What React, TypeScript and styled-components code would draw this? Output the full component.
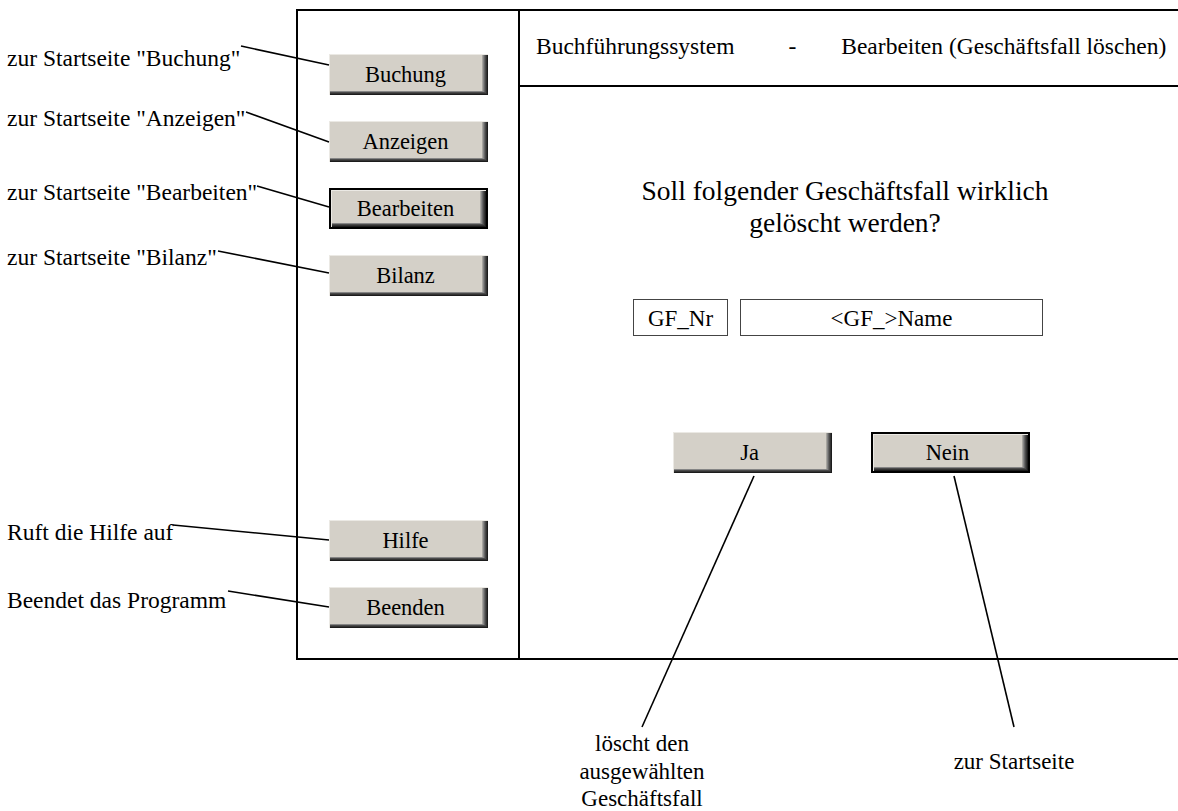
import styled, { createGlobalStyle } from "styled-components";

const GlobalStyle = createGlobalStyle`
  html, body {
    margin: 0;
    padding: 0;
    background: #fff;
  }
  body {
    font-family: "Liberation Serif", "Times New Roman", serif;
    color: #000;
  }
`;

const sideButtons = [
  { label: "Buchung", active: false },
  { label: "Anzeigen", active: false },
  { label: "Bearbeiten", active: true },
  { label: "Bilanz", active: false },
];

const callouts = [
  { text: 'zur Startseite "Buchung"', top: 45 },
  { text: 'zur Startseite "Anzeigen"', top: 105 },
  { text: 'zur Startseite "Bearbeiten"', top: 179 },
  { text: 'zur Startseite "Bilanz"', top: 244 },
  { text: "Ruft die Hilfe auf", top: 519 },
  { text: "Beendet das Programm", top: 587 },
];

// callout leader lines: label end -> button edge
const leaders = [
  [241, 46, 329, 65],
  [246, 112, 329, 142],
  [257, 186, 329, 207],
  [218, 251, 329, 273],
  [173, 525, 329, 540],
  [228, 591, 329, 607],
  [754, 476, 642, 727],
  [954, 476, 1014, 727],
];

export default function App() {
  return (
    <>
      <GlobalStyle />
      <Page>
        <Frame>
          <Sidebar>
            {sideButtons.map((b) => (
              <BevelButton key={b.label} $active={b.active}>
                {b.label}
              </BevelButton>
            ))}
            <Spacer />
            <BevelButton>Hilfe</BevelButton>
            <BevelButton>Beenden</BevelButton>
          </Sidebar>
          <Main>
            <Header>
              <span>Buchführungssystem</span>
              <Dash>-</Dash>
              <span>Bearbeiten (Geschäftsfall löschen)</span>
            </Header>
            <Body>
              <Question>
                Soll folgender Geschäftsfall wirklich
                <br />
                gelöscht werden?
              </Question>
              <FieldRow>
                <Field $width={95}>GF_Nr</Field>
                <Field $width={303}>&lt;GF_&gt;Name</Field>
              </FieldRow>
              <ButtonRow>
                <BevelButton>Ja</BevelButton>
                <BevelButton $active>Nein</BevelButton>
              </ButtonRow>
            </Body>
          </Main>
        </Frame>

        {callouts.map((c) => (
          <Callout key={c.text} style={{ top: c.top }}>
            {c.text}
          </Callout>
        ))}
        <BottomNote style={{ left: 562, top: 730 }}>
          löscht den
          <br />
          ausgewählten
          <br />
          Geschäftsfall
        </BottomNote>
        <BottomNote style={{ left: 934, top: 748 }}>zur Startseite</BottomNote>

        <Leaders width="1178" height="811">
          {leaders.map(([x1, y1, x2, y2], i) => (
            <line key={i} x1={x1} y1={y1} x2={x2} y2={y2} stroke="#000" strokeWidth="1.6" />
          ))}
        </Leaders>
      </Page>
    </>
  );
}

const Page = styled.div`
  position: relative;
  width: 1178px;
  height: 811px;
  overflow: hidden;
  padding-top: 9px;
  box-sizing: border-box;
`;

const Frame = styled.div`
  margin-left: 296px;
  width: 900px;
  height: 651px;
  box-sizing: border-box;
  border: 2px solid #000;
  display: grid;
  grid-template-columns: 222px 1fr;
`;

const Sidebar = styled.div`
  display: flex;
  flex-direction: column;
  gap: 26px;
  padding: 43px 0 30px 31px;
  border-right: 2px solid #000;
`;

const Spacer = styled.div`
  flex: 1;
`;

const BevelButton = styled.div<{ $active?: boolean }>`
  width: 159px;
  height: 41px;
  flex: none;
  box-sizing: border-box;
  display: flex;
  align-items: center;
  justify-content: center;
  padding: 1px 6px 0 0;
  font-size: 22.5px;
  background: #d4d0c8;
  border: ${(p) => (p.$active ? "2px solid #000" : "none")};
  box-shadow:
    inset 1px 1px 0 #ebe9e4,
    inset -1px -1px 0 #1c1c1c,
    inset -2px -2px 0 #333,
    inset -3px -3px 0 #4a4a4a,
    inset -4px -3px 0 #666,
    inset -5px -4px 0 #858585,
    inset -6px -4px 0 #a8a6a0;
`;

const Main = styled.div`
  display: flex;
  flex-direction: column;
`;

const Header = styled.div`
  height: 76px;
  box-sizing: border-box;
  border-bottom: 2px solid #000;
  display: flex;
  align-items: center;
  padding: 0 0 4px 16px;
  font-size: 23.5px;
  white-space: nowrap;
`;

const Dash = styled.span`
  margin: 0 45px 0 54px;
`;

const Body = styled.div`
  display: flex;
  flex-direction: column;
  width: 650px;
`;

const Question = styled.div`
  margin-top: 88px;
  font-size: 27.5px;
  line-height: 32px;
  text-align: center;
`;

const FieldRow = styled.div`
  display: flex;
  gap: 12px;
  margin: 60px 0 0 113px;
`;

const Field = styled.div<{ $width: number }>`
  width: ${(p) => p.$width}px;
  height: 37px;
  box-sizing: border-box;
  border: 1px solid #444;
  display: flex;
  align-items: center;
  justify-content: center;
  padding-top: 2px;
  font-size: 23px;
`;

const ButtonRow = styled.div`
  display: flex;
  gap: 39px;
  margin: 96px 0 0 153px;
`;

const Callout = styled.div`
  position: absolute;
  left: 7px;
  font-size: 23.5px;
  line-height: 26px;
  white-space: nowrap;
`;

const BottomNote = styled.div`
  position: absolute;
  width: 160px;
  font-size: 23px;
  line-height: 27.5px;
  text-align: center;
`;

const Leaders = styled.svg`
  position: absolute;
  left: 0;
  top: 0;
  pointer-events: none;
`;
